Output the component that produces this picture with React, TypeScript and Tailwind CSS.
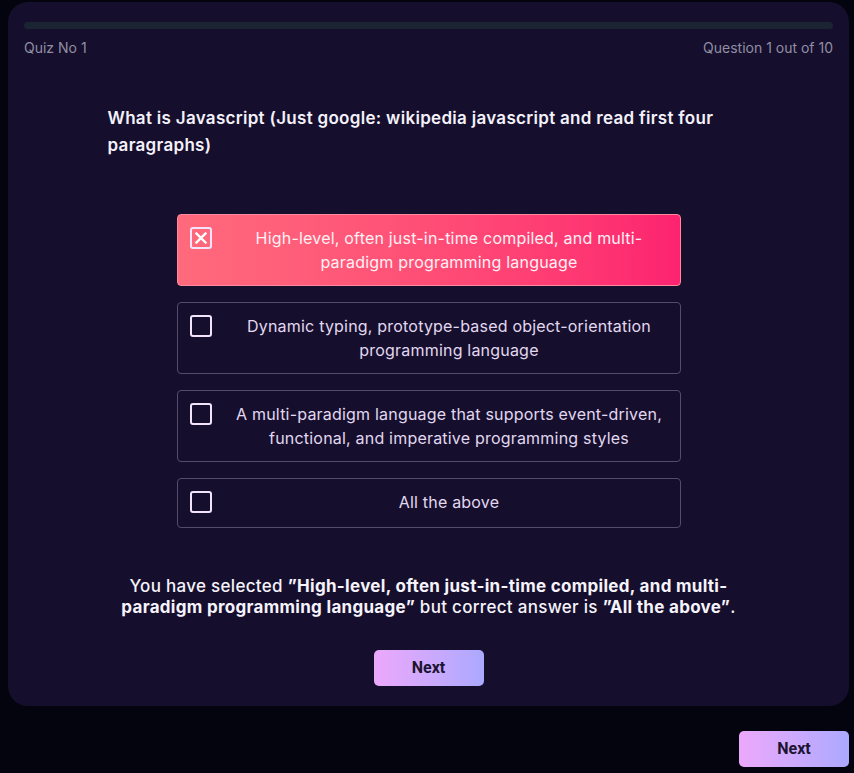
import React from "react";

const options = [
  "High-level, often just-in-time compiled, and multi-paradigm programming language",
  "Dynamic typing, prototype-based object-orientation programming language",
  "A multi-paradigm language that supports event-driven, functional, and imperative programming styles",
  "All the above",
];

function Checkbox({ checked }: { checked: boolean }) {
  return (
    <span className="flex h-[22px] w-[22px] shrink-0 items-center justify-center rounded-[3px] border-2 border-[#f1e4fb]">
      {checked && (
        <svg width="12" height="12" viewBox="0 0 12 12" fill="none">
          <path d="M1.5 1.5l9 9M10.5 1.5l-9 9" stroke="#fff" strokeWidth="2.4" strokeLinecap="square" />
        </svg>
      )}
    </span>
  );
}

function NextButton() {
  return (
    <button
      className="h-[36px] w-[110px] rounded-[5px] bg-gradient-to-r from-[#eca8fb] to-[#aba9ff] text-[16px] font-bold text-[#1c1430]"
      style={{ fontFamily: "'Liberation Sans Narrow', 'Roboto', sans-serif" }}
    >
      Next
    </button>
  );
}

export default function App() {
  const selected = 0;
  return (
    <div
      className="min-h-[773px] bg-[#04040f] pt-[2px]"
      style={{ fontFamily: "Inter, 'Liberation Sans', sans-serif" }}
    >
      <div className="mx-[8px] w-[841px] rounded-[20px] bg-[#150f2d] px-4 pb-[20px] pt-5">
        <div className="h-[7px] w-full rounded-full bg-[#1b2433]" />
        <div className="mt-[8px] flex justify-between text-[14px] text-[#918ea3]">
          <span>Quiz No 1</span>
          <span>Question 1 out of 10</span>
        </div>

        <div className="mx-auto mt-[47px] w-[642px]">
          <h2 className="text-[17px] font-semibold leading-[27px] tracking-[0.3px] text-[#f4f1fa]">
            What is Javascript (Just google: wikipedia javascript and read first four paragraphs)
          </h2>
        </div>

        <div className="mx-auto mt-[55px] flex w-[504px] flex-col gap-[16px]">
          {options.map((opt, i) => {
            const active = i === selected;
            return (
              <button
                key={i}
                className={
                  active
                    ? "flex min-h-[50px] items-start gap-[18px] rounded-[4px] border border-[#ff8aa0] bg-gradient-to-r from-[#ff6a7c] to-[#fd2270] p-[11px] pl-[12px] text-left"
                    : "flex min-h-[50px] items-start gap-[18px] rounded-[4px] border border-[#544c6a] bg-[#150f2d] p-[11px] pl-[12px] text-left"
                }
              >
                <span className="pt-[1px]">
                  <Checkbox checked={active} />
                </span>
                <span
                  className={
                    active
                      ? "flex-1 text-center text-[16px] leading-6 tracking-[0.2px] text-[#fff1f4]"
                      : "flex-1 text-center text-[16px] leading-6 tracking-[0.2px] text-[#e2d8f0]"
                  }
                >
                  {opt}
                </span>
              </button>
            );
          })}
        </div>

        <p className="mx-auto mt-[48px] w-[640px] text-center text-[17px] font-medium leading-[21px] tracking-[0.3px] text-[#f6f3fb]">
          You have selected{" "}
          <span className="font-bold">”High-level, often just-in-time compiled, and multi-paradigm programming language”</span>{" "}
          but correct answer is <span className="font-bold">”All the above”</span>.
        </p>

        <div className="mt-[32px] flex justify-center">
          <NextButton />
        </div>
      </div>

      <div className="mt-[25px] flex justify-end pr-[5px]">
        <NextButton />
      </div>
    </div>
  );
}
